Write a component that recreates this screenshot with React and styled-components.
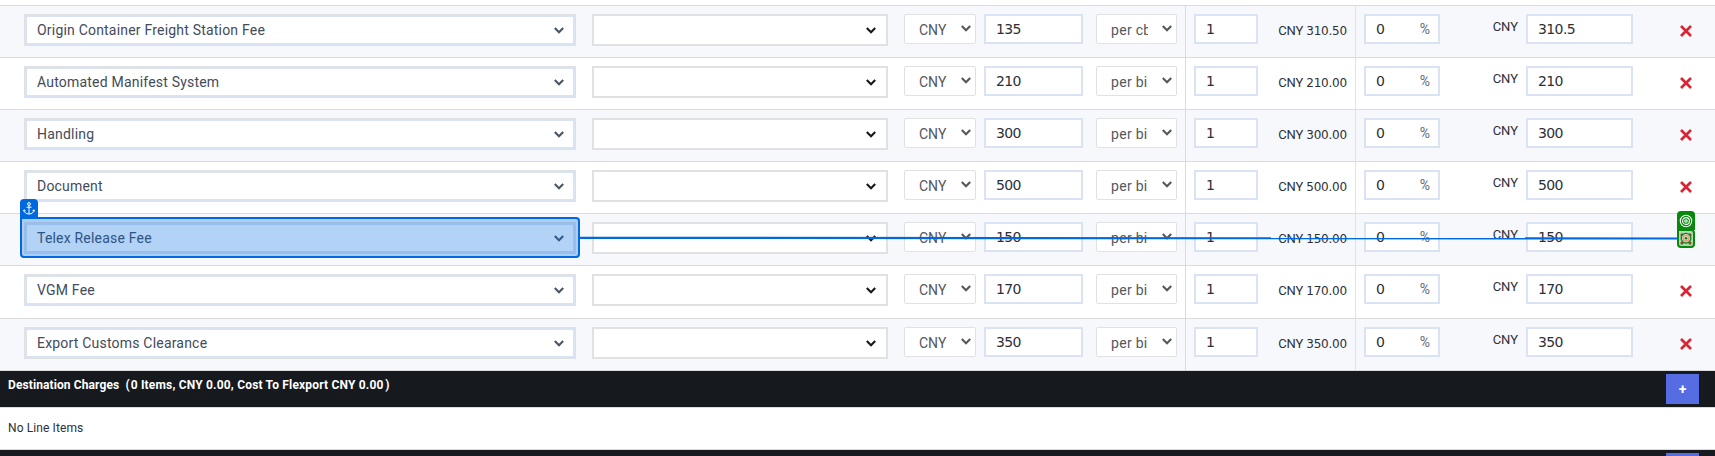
import React from "react";
import styled, { createGlobalStyle } from "styled-components";

const Global = createGlobalStyle`
  * { box-sizing: border-box; }
  body { margin: 0; background: #fff; overflow: hidden; }
`;

const Page = styled.main`
  position: relative;
  width: 1715px;
  height: 456px;
  overflow: hidden;
  padding-top: 5px;
  background: #fff;
  color: #2d3036;
  font-family: Roboto, "Liberation Sans", sans-serif;
`;

const Row = styled.div`
  display: grid;
  grid-template-columns: 1186px 170px 359px;
  height: ${(p) => p.$height}px;
  background: ${(p) => (p.$shaded ? "#f7f8fc" : "#fff")};
`;

const Cell = styled.div`
  display: flex;
  align-items: flex-start;
  padding: 8px 0 0 ${(p) => p.$left}px;
  border-top: 1px solid #dadbdd;
  border-right: ${(p) => (p.$rule ? `1px solid ${p.$rule}` : "none")};
`;

const SelectBox = styled.div`
  display: flex;
  align-items: center;
  justify-content: space-between;
  width: ${(p) => p.$width}px;
  height: 32px;
  margin-right: 16px;
  background: #fff;
  color: #434b59;
  border: ${(p) => (p.$named ? "1px" : "2px")} solid #dfe1e2;
  box-shadow: ${(p) => (p.$named ? "inset 0 0 0 2px #dae3f3" : "none")};
  padding: 0 ${(p) => (p.$named ? 11 : 10)}px 0 12px;
  font-size: 14px;
  letter-spacing: 0.2px;
`;

const SmallSelect = styled.div`
  display: flex;
  align-items: center;
  justify-content: space-between;
  width: ${(p) => p.$width}px;
  height: 30px;
  padding: 2px 4px 0 14px;
  background: #fff;
  border: 1px solid #dfe1e2;
  border-radius: 2px;
  color: #55585c;
  font-size: 14px;
  svg { margin-top: -3px; }
`;

const UnitSelect = styled(SmallSelect)`
  margin-left: 5px;
`;

const Clip = styled.span`
  width: 37px;
  overflow: hidden;
  white-space: nowrap;
  letter-spacing: 0.3px;
`;

const Field = styled.div`
  display: flex;
  align-items: center;
  justify-content: space-between;
  width: ${(p) => p.$width}px;
  height: 30px;
  margin: 0 ${(p) => p.$gap || 0}px;
  padding: 0 8px 1px 10px;
  border: 2px solid #dae3f3;
  background: #fff;
  font-family: "DejaVu Sans", sans-serif;
  font-size: 14px;
  letter-spacing: -0.6px;
`;

const Percent = styled.span`
  color: #626a78;
  font-family: Roboto, sans-serif;
  font-size: 14px;
  letter-spacing: 0;
`;

const Total = styled.span`
  width: 97px;
  padding-right: 8px;
  text-align: right;
  font-size: 13px;
  line-height: 34px;
  letter-spacing: -0.15px;
  white-space: nowrap;
`;

const Amount = styled.span`
  font-family: "DejaVu Sans", sans-serif;
  font-size: 12px;
  letter-spacing: -0.2px;
`;

const Currency = styled.span`
  width: 86px;
  padding-right: 8px;
  text-align: right;
  font-size: 13px;
  line-height: 26px;
`;

const Remove = styled.span`
  display: flex;
  margin: 11px 0 0 47px;
`;

const Bar = styled.header`
  display: flex;
  justify-content: space-between;
  height: ${(p) => p.$height}px;
  padding: 3px 16px 0 8px;
  border-top: 1px solid #dadbdd;
  background: #16191d;
  background-clip: padding-box;
  color: #fff;
  font-size: 12px;
  font-weight: 700;
`;

const BarTitle = styled.span`
  line-height: 22px;
  letter-spacing: 0.1px;
  white-space: pre;
`;

const Summary = styled.span`
  margin: 0 1.5px 0 1px;
  letter-spacing: 0.18px;
`;

const AddButton = styled.button`
  width: 33px;
  height: 30px;
  padding: 0;
  border: 0;
  background: #566ce3;
  color: #fff;
  font: 700 14px Roboto, sans-serif;
`;

const Empty = styled.div`
  height: 42px;
  padding-left: 8px;
  border-top: 1px solid #dadbdd;
  font-size: 12px;
  line-height: 41px;
  letter-spacing: 0.1px;
`;

const Highlight = styled.div`
  position: absolute;
  left: 20px;
  top: 217px;
  width: 560px;
  height: 41px;
  border: 2px solid #0069e0;
  border-radius: 0 4px 4px 4px;
  background: rgba(0, 105, 224, 0.3);
`;

const Tag = styled.div`
  position: absolute;
  left: ${(p) => p.$x}px;
  top: ${(p) => p.$y}px;
  width: 18px;
  height: 19px;
  display: flex;
  align-items: center;
  justify-content: center;
  border-radius: 4px 4px 0 0;
  background: ${(p) => p.$color};
`;

const TargetBox = styled.div`
  position: absolute;
  left: 1677px;
  top: 229px;
  width: 18px;
  height: 19px;
  display: flex;
  align-items: center;
  justify-content: center;
  border: 2px solid #078a0b;
  border-radius: 0 4px 4px 4px;
  background: rgba(7, 138, 11, 0.3);
`;

const Connector = styled.svg`
  position: absolute;
  left: 580px;
  top: 230px;
`;

const Chevron = ({ color }) => (
  <svg width="10" height="7" viewBox="0 0 10 7" fill="none" stroke={color} strokeWidth="2.1">
    <path d="M0.8 1 5 5.3 9.2 1" />
  </svg>
);

const Cross = () => (
  <svg width="12" height="12" viewBox="0 0 12 12" fill="none" stroke="#da2433" strokeWidth="2.7">
    <path d="M1 1 11 11M11 1 1 11" />
  </svg>
);

const Anchor = () => (
  <svg width="12" height="13" viewBox="0 0 12 13" fill="none" stroke="#fff" strokeWidth="1">
    <circle cx="6" cy="2" r="1.4" />
    <path d="M6 3.4V12M3.5 5.2h5M1 8C1.3 10.5 3 12 6 12s4.7-1.5 5-4M.4 9.3 1 7.8l1.5 1M11.6 9.3 11 7.8 9.5 8.8" />
  </svg>
);

const Target = () => (
  <svg width="14" height="14" viewBox="0 0 14 14" fill="none" stroke="#fff" strokeWidth="1.1">
    <circle cx="7" cy="7" r="5.7" />
    <circle cx="7" cy="7" r="3.4" />
    <circle cx="7" cy="7" r="1.2" />
  </svg>
);

const DropPoint = () => (
  <svg width="14" height="15" viewBox="0 0 14 15" fill="none">
    <circle cx="7" cy="7.2" r="4.8" fill="#e8d8cc" stroke="#078a0b" strokeWidth="1.3" />
    <circle cx="7" cy="7.2" r="2.8" stroke="#e39a90" strokeWidth="1.4" />
    <circle cx="7" cy="7.2" r="1.3" fill="#078a0b" />
  </svg>
);

const charges = [
  { name: "Origin Container Freight Station Fee", rate: "135", unit: "per cbm", total: "310.50", cost: "310.5" },
  { name: "Automated Manifest System", rate: "210", unit: "per bi", total: "210.00", cost: "210" },
  { name: "Handling", rate: "300", unit: "per bi", total: "300.00", cost: "300" },
  { name: "Document", rate: "500", unit: "per bi", total: "500.00", cost: "500" },
  { name: "Telex Release Fee", rate: "150", unit: "per bi", total: "150.00", cost: "150" },
  { name: "VGM Fee", rate: "170", unit: "per bi", total: "170.00", cost: "170", height: 53 },
  { name: "Export Customs Clearance", rate: "350", unit: "per bi", total: "350.00", cost: "350" },
];

const ChargeRow = ({ charge, shaded }) => (
  <Row $shaded={shaded} $height={charge.height || 52}>
    <Cell $left={24} $rule="#dadbdd">
      <SelectBox $width={552} $named>
        {charge.name}
        <Chevron color="#4a5568" />
      </SelectBox>
      <SelectBox $width={296}>
        <span />
        <Chevron color="#16191d" />
      </SelectBox>
      <SmallSelect $width={72}>
        CNY
        <Chevron color="#55585c" />
      </SmallSelect>
      <Field $width={99} $gap={8}>{charge.rate}</Field>
      <UnitSelect $width={81}>
        <Clip>{charge.unit}</Clip>
        <Chevron color="#55585c" />
      </UnitSelect>
    </Cell>
    <Cell $left={8} $rule="#dae3f3">
      <Field $width={64}>1</Field>
      <Total>
        CNY <Amount>{charge.total}</Amount>
      </Total>
    </Cell>
    <Cell $left={8}>
      <Field $width={76}>
        0<Percent>%</Percent>
      </Field>
      <Currency>CNY</Currency>
      <Field $width={107}>{charge.cost}</Field>
      <Remove>
        <Cross />
      </Remove>
    </Cell>
  </Row>
);

export default function App() {
  return (
    <Page>
      <Global />
      {charges.map((charge, i) => (
        <ChargeRow key={charge.name} charge={charge} shaded={i % 2 === 0} />
      ))}
      <Bar $height={37}>
        <BarTitle>
          {"Destination Charges  ("}
          <Summary>0 Items, CNY 0.00, Cost To Flexport CNY 0.00</Summary>)
        </BarTitle>
        <AddButton>+</AddButton>
      </Bar>
      <Empty>No Line Items</Empty>
      <Bar $height={37}>
        <span />
        <AddButton />
      </Bar>
      <Highlight />
      <Tag $x={20} $y={199} $color="#0069e0">
        <Anchor />
      </Tag>
      <Connector width="1098" height="16" stroke="#0069e0" strokeWidth="2.2">
        <line x1="0" y1="7.8" x2="1098" y2="8.5" />
      </Connector>
      <Tag $x={1677} $y={211} $color="#078a0b">
        <Target />
      </Tag>
      <TargetBox>
        <DropPoint />
      </TargetBox>
    </Page>
  );
}
